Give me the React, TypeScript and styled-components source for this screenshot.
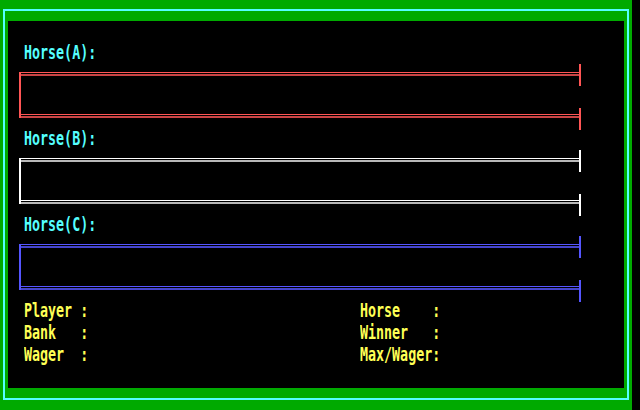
import React from "react";
import styled, { createGlobalStyle } from "styled-components";

const GlobalStyle = createGlobalStyle`
  html, body {
    margin: 0;
    padding: 0;
    background: #000;
  }
  body {
    width: 640px;
    height: 410px;
    overflow: hidden;
  }
`;

type Lane = { name: string; bright: string; dim: string };

const lanes: Lane[] = [
  { name: "Horse(A):", bright: "#ff5555", dim: "#c84444" },
  { name: "Horse(B):", bright: "#ffffff", dim: "#b8b8b8" },
  { name: "Horse(C):", bright: "#5555ff", dim: "#4444cc" },
];

const Screen = styled.div`
  width: 632px;
  height: 410px;
  box-sizing: border-box;
  padding: 9px 0 0 3px;
  background: #00aa00;
`;

const Frame = styled.div`
  width: 626px;
  height: 391px;
  box-sizing: border-box;
  border: 2px solid #55ffff;
  padding: 10px 3px;
`;

const Panel = styled.main`
  height: 100%;
  box-sizing: border-box;
  background: #000;
  padding: 21px 0 0 11px;
  display: flex;
  flex-direction: column;
  gap: 10px;
`;

const LaneBlock = styled.section`
  display: flex;
  flex-direction: column;
  gap: 14px;
`;

const Text = styled.div<{ $color: string }>`
  height: 16px;
  font-family: "DejaVu Sans Mono", "Liberation Mono", monospace;
  font-weight: bold;
  font-size: 13.33px;
  line-height: 16px;
  white-space: pre;
  color: ${(p) => p.$color};
  transform: scaleY(1.4);
  transform-origin: 0 0;
`;

const LaneLabel = styled(Text)`
  padding-left: 5px;
`;

const rail = (bright: string, dim: string) =>
  `linear-gradient(to bottom, ${bright} 0 1px, transparent 1px 2px, ${dim} 2px 4px, transparent 4px)`;

const Track = styled.div<{ $bright: string; $dim: string }>`
  position: relative;
  width: 562px;
  height: 46px;
  box-sizing: border-box;
  border-left: 2px solid ${(p) => p.$bright};
  background: ${(p) => rail(p.$bright, p.$dim)} top / 100% 4px no-repeat,
    ${(p) => rail(p.$bright, p.$dim)} bottom / 100% 4px no-repeat;

  &::before,
  &::after {
    content: "";
    position: absolute;
    right: 0;
    width: 2px;
    height: 22px;
    background: ${(p) => p.$bright};
  }
  &::before {
    top: -8px;
  }
  &::after {
    top: 36px;
  }
`;

const Stats = styled.div`
  display: grid;
  grid-template-columns: 336px auto;
  grid-auto-rows: 16px;
  row-gap: 6px;
  padding-left: 5px;
`;

const left = ["Player :", "Bank   :", "Wager  :"];
const right = ["Horse    :", "Winner   :", "Max/Wager:"];

export default function App() {
  return (
    <>
      <GlobalStyle />
      <Screen>
        <Frame>
          <Panel>
            {lanes.map((l) => (
              <LaneBlock key={l.name}>
                <LaneLabel $color="#55ffff">{l.name}</LaneLabel>
                <Track $bright={l.bright} $dim={l.dim} />
              </LaneBlock>
            ))}
            <Stats>
              {left.map((t, i) => (
                <React.Fragment key={t}>
                  <Text $color="#ffff55">{t}</Text>
                  <Text $color="#ffff55">{right[i]}</Text>
                </React.Fragment>
              ))}
            </Stats>
          </Panel>
        </Frame>
      </Screen>
    </>
  );
}
